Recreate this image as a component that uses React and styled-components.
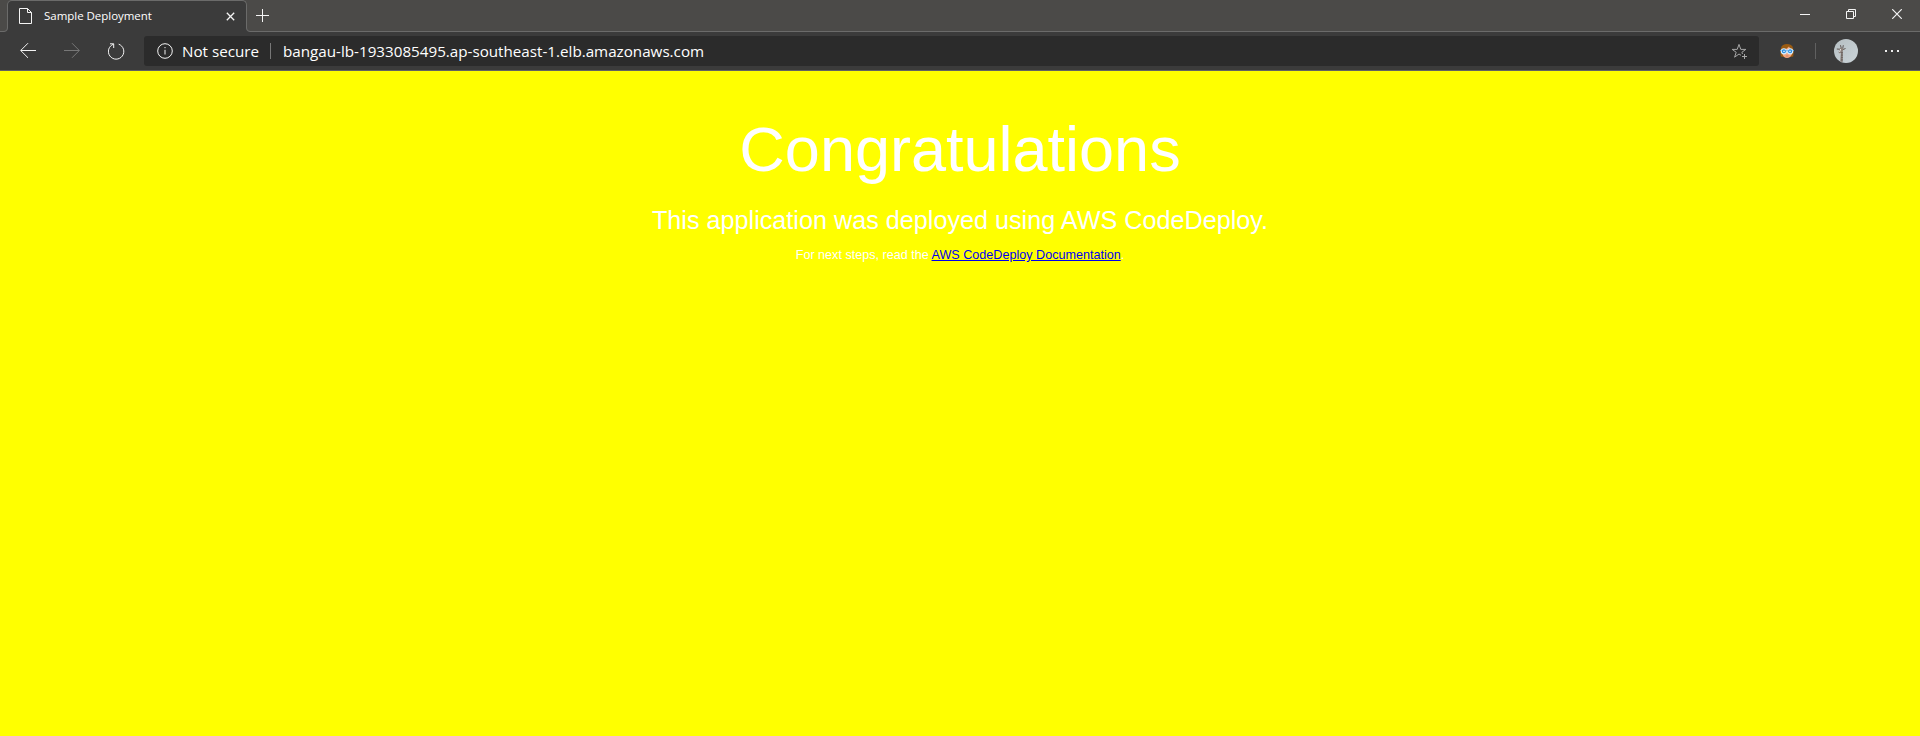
import React from "react";
import styled, { createGlobalStyle } from "styled-components";

const GlobalStyle = createGlobalStyle`
  *, *::before, *::after { box-sizing: border-box; }
  body { margin: 0; background: #ffff00; }
`;

const Window = styled.div`
  display: flex;
  flex-direction: column;
  width: 100%;
  height: 736px;
  overflow: hidden;
  background: #ffff00;
  font-family: "Open Sans", "Noto Sans", sans-serif;
  color: #fff;
`;

const TabStrip = styled.header`
  display: flex;
  height: 32px;
  padding-left: 7px;
  background: #4b4a48;
  box-shadow: inset 0 -1px #6b6b6a;
`;

const Tab = styled.div`
  position: relative;
  display: flex;
  align-items: center;
  width: 240px;
  height: 32px;
  padding: 0 10px 1px 11px;
  background: #3b3b3b;
  border: 1px solid #6b6b6a;
  border-bottom: 0;
  border-radius: 5px 5px 0 0;
`;

const TabFlare = styled.svg`
  position: absolute;
  bottom: 0;
  width: 4px;
  height: 4px;
  ${(p) => (p.$side === "left" ? "left: -4px;" : "right: -4px; transform: scaleX(-1);")}
`;

const TabTitle = styled.span`
  flex: 1;
  margin: 0 0 1px 11px;
  font-size: 11.5px;
  line-height: 16px;
  letter-spacing: -0.03px;
  white-space: nowrap;
`;

const Icon = styled.svg`
  display: block;
  flex: none;
  fill: none;
  stroke: ${(p) => p.$color || "#f4f4f4"};
  stroke-width: ${(p) => p.$weight || 1};
`;

const NewTab = styled.div`
  display: flex;
  align-items: center;
  margin-left: 9px;
  height: 31px;
`;

const WindowControls = styled.div`
  display: flex;
  margin-left: auto;
`;

const ControlButton = styled.div`
  display: flex;
  align-items: center;
  justify-content: center;
  width: 46px;
  height: 28px;
`;

const Toolbar = styled.nav`
  display: flex;
  align-items: center;
  height: 39px;
  padding: 0 0 1px 20px;
  background: #3b3b3b;
  box-shadow: inset 0 -1px #626262;
`;

const NavButtons = styled.div`
  display: flex;
  gap: 28px;
  width: 124px;
`;

const AddressBar = styled.div`
  display: flex;
  align-items: center;
  width: 1615px;
  height: 30px;
  padding: 0 12px 0 13px;
  border-radius: 3px;
  background: #2b2b2b;
`;

const AddressText = styled.span`
  margin-left: ${(p) => p.$gap}px;
  font-size: 15.2px;
  line-height: 22px;
  white-space: nowrap;
`;

const Divider = styled.span`
  width: 1px;
  height: 16px;
  margin-left: ${(p) => p.$gap}px;
  background: ${(p) => p.$color};
`;

const Favorite = styled.div`
  margin-left: auto;
`;

const Actions = styled.div`
  display: flex;
  align-items: center;
  flex: 1;
  padding-left: 21px;
`;

const Picture = styled.svg`
  display: block;
  flex: none;
  margin-left: ${(p) => p.$gap}px;
`;

const Page = styled.main`
  display: flex;
  flex-direction: column;
  align-items: center;
  padding-top: 41px;
  font-family: "Liberation Sans", Arial, sans-serif;
`;

const Heading = styled.h1`
  margin: 0;
  font-size: 63px;
  line-height: 74px;
  font-weight: 400;
`;

const Subheading = styled.h2`
  margin: 19px 0 0;
  font-size: 25.2px;
  line-height: 30px;
  font-weight: 400;
`;

const Note = styled.p`
  margin: 12px 0 0;
  font-size: 12.6px;
  line-height: 16px;
`;

const DocLink = styled.a`
  color: #0000ee;
  text-decoration: underline;
`;

const Flare = ({ side }) => (
  <TabFlare $side={side} viewBox="0 0 4 4">
    <path d="M4 0V4H0V3.5Q3.5 3.5 3.5 0Z" fill="#3b3b3b" />
    <path d="M0 3.5Q3.5 3.5 3.5 0" fill="none" stroke="#6b6b6a" />
  </TabFlare>
);

const Woman = () => (
  <Picture $gap={0} width="14" height="14" viewBox="0 0 14 14">
    <path d="M.8 12.5C0 7 .5 3 3 1Q7-1 11 1C13.7 3 14 8 13.2 12.5L10 13H4Z" fill="#9a5b12" />
    <path d="M3 6Q7 5 9 2.5Q10 5 12 6V10Q10.5 14 7 14Q3.5 14 2.5 10Z" fill="#f3a57f" />
    <circle cx="3.9" cy="7.3" r="2.6" fill="#2488dc" stroke="#d9efff" strokeWidth="1.1" />
    <circle cx="10.1" cy="7.3" r="2.6" fill="#2488dc" stroke="#d9efff" strokeWidth="1.1" />
    <circle cx="4" cy="7.4" r=".8" fill="#e6f5ff" />
    <circle cx="10" cy="7.4" r=".8" fill="#e6f5ff" />
    <path d="M0 6.5H1.3M12.7 6.5H14M6.2 6.8H7.8" stroke="#4a9fe4" />
    <path d="M5.8 12H8.4" stroke="#c77761" strokeWidth=".8" />
  </Picture>
);

const Avatar = () => (
  <Picture $gap={18} width="24" height="24" viewBox="0 0 24 24">
    <defs>
      <linearGradient id="sky" x1="0" y1="0" x2="1" y2="1">
        <stop offset="0" stopColor="#b5bec2" />
        <stop offset="1" stopColor="#cbd4d8" />
      </linearGradient>
    </defs>
    <circle cx="12" cy="12" r="12" fill="url(#sky)" />
    <path d="M6.5 6.2L7.2 9M9.3 6.2L8.8 9M2.8 10L6.5 10.3M11.5 9.5L8.8 10.6" stroke="#5d5552" strokeWidth="1" />
    <path d="M6 9H9.4L8.8 12.5L8.7 23.3L6.2 22.5L6.9 14L5 14.2L4.6 13Z" fill="#8b817c" />
    <path d="M8 13V22" stroke="#4f4744" strokeWidth="1" strokeDasharray="1.4 1" />
    <path d="M6.6 10L5.6 13" stroke="#e8e6e3" strokeWidth="1" />
  </Picture>
);

export default function App() {
  return (
    <Window>
      <GlobalStyle />
      <TabStrip>
        <Tab>
          <Flare side="left" />
          <Icon width="14" height="16" viewBox="0 0 14 16">
            <path d="M.5.5H8.5L12.5 4.5V15.5H.5ZM8.5.5V4.5H12.5" />
          </Icon>
          <TabTitle>Sample Deployment</TabTitle>
          <Icon width="10" height="10" viewBox="0 0 10 10" $weight={1.3}>
            <path d="M.8 1.8L8.2 9.2M8.2 1.8L.8 9.2" />
          </Icon>
          <Flare side="right" />
        </Tab>
        <NewTab>
          <Icon width="13" height="13" viewBox="0 0 13 13">
            <path d="M0 6.5H13M6.5 0V13" />
          </Icon>
        </NewTab>
        <WindowControls>
          <ControlButton>
            <Icon width="10" height="10" viewBox="0 0 10 10"><path d="M0 5.5H10" /></Icon>
          </ControlButton>
          <ControlButton>
            <Icon width="10" height="10" viewBox="0 0 10 10">
              <path d="M.5 2.5H7.5V9.5H.5ZM2.5 2.5V.5H9.5V7.5H7.5" />
            </Icon>
          </ControlButton>
          <ControlButton>
            <Icon width="10" height="10" viewBox="0 0 10 10" $weight={1.2}><path d="M.2.2L9.8 9.8M9.8.2L.2 9.8" /></Icon>
          </ControlButton>
        </WindowControls>
      </TabStrip>
      <Toolbar>
        <NavButtons>
          <Icon width="16" height="16" viewBox="0 0 16 16"><path d="M16 7.5H.8M8 .2L.7 7.5L8 14.8" /></Icon>
          <Icon width="16" height="16" viewBox="0 0 16 16" $color="#777"><path d="M0 7.5H15.2M8 .2L15.3 7.5L8 14.8" /></Icon>
          <Icon width="17" height="17" viewBox="0 0 17 17"><path d="M2 .8H5.7V5M5.5 1.2A7.7 7.7 0 1 0 10.7 1.2" /></Icon>
        </NavButtons>
        <AddressBar>
          <Icon width="16" height="16" viewBox="0 0 16 16">
            <circle cx="8" cy="8" r="7.3" />
            <path d="M8 6.8V11.5M8 4V5.2" />
          </Icon>
          <AddressText $gap={9}>Not secure</AddressText>
          <Divider $gap={11} $color="#777" />
          <AddressText $gap={12}>bangau-lb-1933085495.ap-southeast-1.elb.amazonaws.com</AddressText>
          <Favorite>
            <Icon width="16" height="16" viewBox="0 0 16 16" $color="#a7a7a7">
              <path d="M10 12.3L8 11L3.6 14.2L5.2 9.3L1.2 6.4H6.2L8 1.4L9.8 6.4H14.8L10.9 9.3L11.5 11M13.5 11V16M11 13.5H16" />
            </Icon>
          </Favorite>
        </AddressBar>
        <Actions>
          <Woman />
          <Divider $gap={21} $color="#606060" />
          <Avatar />
          <Picture $gap={27} width="14" height="2" viewBox="0 0 14 2" fill="#eee">
            <rect width="2" height="2" /><rect x="6" width="2" height="2" /><rect x="12" width="2" height="2" />
          </Picture>
        </Actions>
      </Toolbar>
      <Page>
        <Heading>Congratulations</Heading>
        <Subheading>This application was deployed using AWS CodeDeploy.</Subheading>
        <Note>For next steps, read the <DocLink href="#">AWS CodeDeploy Documentation</DocLink>.</Note>
      </Page>
    </Window>
  );
}
